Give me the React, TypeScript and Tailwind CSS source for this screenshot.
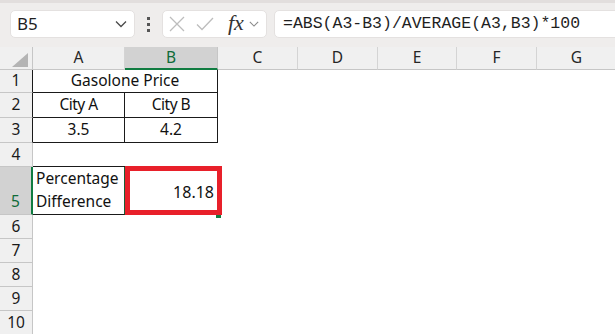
import React from "react";

const cellFont = { fontFamily: '"Noto Sans", "Open Sans", sans-serif' };

type Col = { l: string; w: number };
const cols: Col[] = [
  { l: "A", w: 92 },
  { l: "B", w: 93 },
  { l: "C", w: 80 },
  { l: "D", w: 80 },
  { l: "E", w: 79 },
  { l: "F", w: 80 },
  { l: "G", w: 80 },
];

const rowHeights = [23, 25, 25, 24, 48, 24, 24, 24, 24, 24];

function Chevron({ className }: { className?: string }) {
  return (
    <svg width="12" height="8" viewBox="0 0 12 8" className={className}>
      <path d="M1 1.5 L6 6.5 L11 1.5" fill="none" stroke="currentColor" strokeWidth="1.3" />
    </svg>
  );
}

function Toolbar() {
  return (
    <div className="relative h-[47px] bg-[#efedec] flex items-start overflow-hidden">
      <div className="absolute left-0 right-0 top-0 h-[3px] bg-[#e2dedd]" />
      <div className="mt-[10px] ml-[10px] w-[125px] h-[28px] bg-white rounded-[5px] border border-[#e4e1e0] flex items-center justify-between pl-[6px] pr-[7px]">
        <span className="text-[17px] text-[#1f1f1f]" style={cellFont}>B5</span>
        <Chevron className="text-[#4a4a4a]" />
      </div>
      <div className="w-[27px] h-[47px] flex flex-col items-center justify-center gap-[3px] pt-[2px]">
        <div className="w-[3px] h-[3px] bg-[#555]" />
        <div className="w-[3px] h-[3px] bg-[#555]" />
        <div className="w-[3px] h-[3px] bg-[#555]" />
      </div>
      <div className="mt-[10px] w-[105px] h-[28px] bg-white rounded-[5px] border border-[#e4e1e0] flex items-center pl-[5px]">
        <svg width="16" height="16" viewBox="0 0 16 16" className="ml-[1px]">
          <path d="M1 1 L15 15 M15 1 L1 15" stroke="#bdbdbd" strokeWidth="1.3" fill="none" />
        </svg>
        <svg width="18" height="14" viewBox="0 0 18 14" className="ml-[11px]">
          <path d="M1 7.5 L6 12.5 L17 1" stroke="#bdbdbd" strokeWidth="1.3" fill="none" />
        </svg>
        <span
          className="ml-[14px] text-[22px] italic text-[#333] leading-none pb-[2px]"
          style={{ fontFamily: '"Liberation Serif", "DejaVu Serif", serif' }}
        >
          fx
        </span>
        <Chevron className="ml-[5px] text-[#8a8a8a] w-[10px]" />
      </div>
      <div className="mt-[10px] ml-[7px] flex-1 -mr-[20px] h-[28px] bg-white rounded-[5px] border border-[#e4e1e0] flex items-center pl-[8px]">
        <span
          className="text-[16.5px] text-[#1f1f1f] whitespace-nowrap"
          style={{ fontFamily: '"Liberation Mono", "DejaVu Sans Mono", monospace' }}
        >
          =ABS(A3-B3)/AVERAGE(A3,B3)*100
        </span>
      </div>
    </div>
  );
}

function HeaderRow() {
  return (
    <div className="flex h-[23px]" style={cellFont}>
      <div className="w-[33px] shrink-0 h-full bg-[#f0f0f0] border-r border-b border-[#c6c6c6] relative">
        <svg width="16" height="14" viewBox="0 0 16 14" className="absolute right-[4px] bottom-[2px]">
          <path d="M16 0 L16 14 L0 14 Z" fill="#b4b4b4" />
        </svg>
      </div>
      {cols.map((c) =>
        c.l === "B" ? (
          <div
            key={c.l}
            style={{ width: c.w }}
            className="shrink-0 h-full bg-[#d2d2d2] border-r border-[#c6c6c6] border-b-2 border-b-[#107c41] flex items-center justify-center text-[15.5px] text-[#0f6b38]"
          >
            {c.l}
          </div>
        ) : (
          <div
            key={c.l}
            style={{ width: c.w }}
            className="shrink-0 h-full bg-[#f0f0f0] border-r border-b border-[#d4d4d4] border-b-[#c6c6c6] flex items-center justify-center text-[15.5px] text-[#262626]"
          >
            {c.l}
          </div>
        )
      )}
    </div>
  );
}

function RowHeader({ n, h }: { n: number; h: number }) {
  const sel = n === 5;
  const dark = n <= 3;
  return (
    <div
      style={{ height: h }}
      className={
        "w-[33px] shrink-0 flex justify-center border-b border-[#c6c6c6] text-[15.5px] " +
        (sel
          ? "bg-[#d2d2d2] items-end pb-[1px] border-r-2 border-r-[#107c41] text-[#0f6b38]"
          : dark
          ? "bg-[#f0f0f0] items-center border-r border-r-[#1a1a1a] text-[#1a1a1a]"
          : "bg-[#f0f0f0] items-center border-r border-r-[#c6c6c6] text-[#1a1a1a]")
      }
    >
      {n}
    </div>
  );
}

function Empty({ w }: { w: number }) {
  return <div style={{ width: w }} className="shrink-0 h-full" />;
}

function Rest({ from }: { from: number }) {
  return (
    <>
      {cols.slice(from).map((c) => (
        <Empty key={c.l} w={c.w} />
      ))}
    </>
  );
}

function Grid() {
  return (
    <div className="flex flex-col text-[15.5px] text-[#111]" style={cellFont}>
      <HeaderRow />
      <div className="flex" style={{ height: rowHeights[0] }}>
        <RowHeader n={1} h={rowHeights[0]} />
        <div className="w-[185px] shrink-0 h-full border-r border-b border-[#1a1a1a] flex items-center justify-center">
          Gasolone Price
        </div>
        <Rest from={2} />
      </div>
      <div className="flex" style={{ height: rowHeights[1] }}>
        <RowHeader n={2} h={rowHeights[1]} />
        <div className="w-[92px] shrink-0 h-full border-r border-b border-[#1a1a1a] flex items-center justify-center tracking-[-0.5px]">
          City A
        </div>
        <div className="w-[93px] shrink-0 h-full border-r border-b border-[#1a1a1a] flex items-center justify-center tracking-[-0.5px]">
          City B
        </div>
        <Rest from={2} />
      </div>
      <div className="flex" style={{ height: rowHeights[2] }}>
        <RowHeader n={3} h={rowHeights[2]} />
        <div className="w-[92px] shrink-0 h-full border-r border-b border-[#1a1a1a] flex items-center justify-center">
          3.5
        </div>
        <div className="w-[93px] shrink-0 h-full border-r border-b border-[#1a1a1a] flex items-center justify-center">
          4.2
        </div>
        <Rest from={2} />
      </div>
      <div className="flex" style={{ height: rowHeights[3] }}>
        <RowHeader n={4} h={rowHeights[3]} />
        <div className="w-[92px] shrink-0 h-full border-b border-[#1a1a1a]" />
        <div className="w-[93px] shrink-0 h-full border-b border-[#1a1a1a]" />
        <Rest from={2} />
      </div>
      <div className="flex" style={{ height: rowHeights[4] }}>
        <RowHeader n={5} h={rowHeights[4]} />
        <div className="w-[92px] shrink-0 h-full border-r border-b border-[#1a1a1a] border-r-[#1b5e38] flex flex-col justify-end pl-[3px] pb-[1px] leading-[23px]">
          <span>Percentage</span>
          <span>Difference</span>
        </div>
        <div className="w-[93px] shrink-0 h-full relative flex items-center justify-end pr-[4px] pt-[2px] text-[16px]">
          18.18
          <div className="absolute left-[91px] top-[46px] w-[5px] h-[5px] bg-[#107c41]" />
          <div className="absolute left-0 top-[-1px] w-[97px] h-[49px] border-[5px] border-[#e8202a]" />
        </div>
        <Rest from={2} />
      </div>
      {[6, 7, 8, 9, 10].map((n) => (
        <div key={n} className="flex" style={{ height: rowHeights[n - 1] }}>
          <RowHeader n={n} h={rowHeights[n - 1]} />
          <Rest from={0} />
        </div>
      ))}
    </div>
  );
}

export default function App() {
  return (
    <div className="w-[615px] h-[334px] overflow-hidden bg-white">
      <Toolbar />
      <Grid />
    </div>
  );
}
